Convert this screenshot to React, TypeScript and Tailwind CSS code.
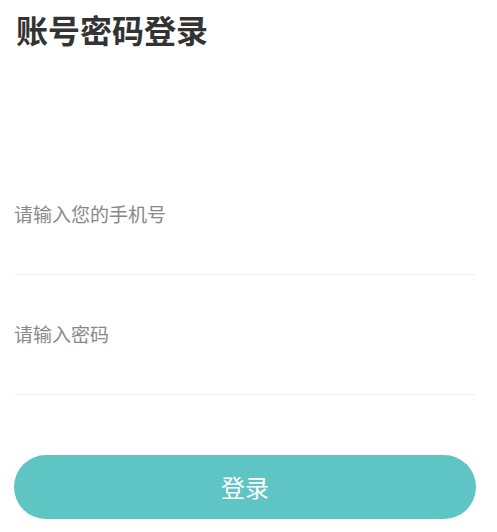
import React from 'react';

const font = { fontFamily: '"Noto Sans CJK SC", "Noto Sans", sans-serif' };

export default function App() {
  return (
    <div className="min-h-screen bg-white pl-[14px] pr-[21px]" style={font}>
      {/* Title */}
      <h1 className="pt-[9px] pl-[2px] text-[32px] leading-[40px] font-bold text-[#333333]">
        账号密码登录
      </h1>

      {/* Fields */}
      <div className="mt-[106px]">
        <div className="h-[120px] flex items-center border-b border-[#f0f0f0]">
          <input
            type="tel"
            placeholder="请输入您的手机号"
            className="w-full bg-transparent outline-none text-[19px] text-[#333] placeholder:text-[#888888]"
          />
        </div>
        <div className="h-[120px] flex items-center border-b border-[#f0f0f0]">
          <input
            type="password"
            placeholder="请输入密码"
            className="w-full bg-transparent outline-none text-[19px] text-[#333] placeholder:text-[#888888]"
          />
        </div>
      </div>

      {/* Submit */}
      <button className="mt-[60px] w-full h-[64px] rounded-full bg-[#5ec5c4] text-white text-[24px]">
        登录
      </button>
    </div>
  );
}
